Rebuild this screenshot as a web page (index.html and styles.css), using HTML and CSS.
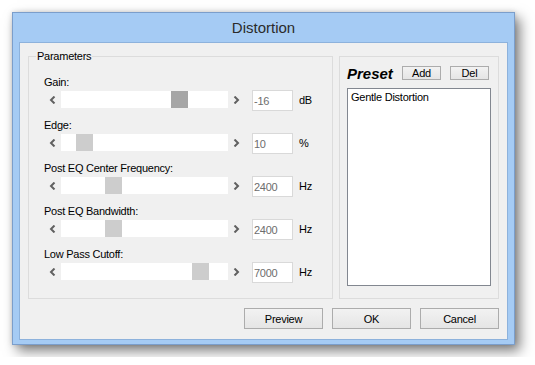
FILE: index.html
```html
<!DOCTYPE html>
<html lang="en">
<head>
    <meta charset="UTF-8">
    <title>Distortion</title>
    <link rel="stylesheet" href="styles.css">
</head>
<body>
    <div class="window">
        <div class="titlebar">Distortion</div>
        <div class="client">
            <div class="panels">
                <fieldset class="params">
                    <legend>Parameters</legend>
                    <div class="param-list">
                        <div class="param">
                            <div class="param-label">Gain:</div>
                            <div class="param-controls">
                                <div class="hscroll">
                                    <span class="arrow"><svg width="7" height="8" viewBox="0 0 7 8"><polyline points="5.5,0.5 2,4 5.5,7.5"/></svg></span>
                                    <div class="track"><div class="thumb active" style="margin-left: 110px"></div></div>
                                    <span class="arrow"><svg width="7" height="8" viewBox="0 0 7 8"><polyline points="1.5,0.5 5,4 1.5,7.5"/></svg></span>
                                </div>
                                <input class="value" type="text" value="-16" readonly>
                                <span class="unit">dB</span>
                            </div>
                        </div>
                        <div class="param">
                            <div class="param-label">Edge:</div>
                            <div class="param-controls">
                                <div class="hscroll">
                                    <span class="arrow"><svg width="7" height="8" viewBox="0 0 7 8"><polyline points="5.5,0.5 2,4 5.5,7.5"/></svg></span>
                                    <div class="track"><div class="thumb" style="margin-left: 15px"></div></div>
                                    <span class="arrow"><svg width="7" height="8" viewBox="0 0 7 8"><polyline points="1.5,0.5 5,4 1.5,7.5"/></svg></span>
                                </div>
                                <input class="value" type="text" value="10" readonly>
                                <span class="unit">%</span>
                            </div>
                        </div>
                        <div class="param">
                            <div class="param-label">Post EQ Center Frequency:</div>
                            <div class="param-controls">
                                <div class="hscroll">
                                    <span class="arrow"><svg width="7" height="8" viewBox="0 0 7 8"><polyline points="5.5,0.5 2,4 5.5,7.5"/></svg></span>
                                    <div class="track"><div class="thumb" style="margin-left: 44px"></div></div>
                                    <span class="arrow"><svg width="7" height="8" viewBox="0 0 7 8"><polyline points="1.5,0.5 5,4 1.5,7.5"/></svg></span>
                                </div>
                                <input class="value" type="text" value="2400" readonly>
                                <span class="unit">Hz</span>
                            </div>
                        </div>
                        <div class="param">
                            <div class="param-label">Post EQ Bandwidth:</div>
                            <div class="param-controls">
                                <div class="hscroll">
                                    <span class="arrow"><svg width="7" height="8" viewBox="0 0 7 8"><polyline points="5.5,0.5 2,4 5.5,7.5"/></svg></span>
                                    <div class="track"><div class="thumb" style="margin-left: 44px"></div></div>
                                    <span class="arrow"><svg width="7" height="8" viewBox="0 0 7 8"><polyline points="1.5,0.5 5,4 1.5,7.5"/></svg></span>
                                </div>
                                <input class="value" type="text" value="2400" readonly>
                                <span class="unit">Hz</span>
                            </div>
                        </div>
                        <div class="param">
                            <div class="param-label">Low Pass Cutoff:</div>
                            <div class="param-controls">
                                <div class="hscroll">
                                    <span class="arrow"><svg width="7" height="8" viewBox="0 0 7 8"><polyline points="5.5,0.5 2,4 5.5,7.5"/></svg></span>
                                    <div class="track"><div class="thumb" style="margin-left: 131px"></div></div>
                                    <span class="arrow"><svg width="7" height="8" viewBox="0 0 7 8"><polyline points="1.5,0.5 5,4 1.5,7.5"/></svg></span>
                                </div>
                                <input class="value" type="text" value="7000" readonly>
                                <span class="unit">Hz</span>
                            </div>
                        </div>
                    </div>
                </fieldset>

                <div class="preset">
                    <div class="preset-head">
                        <span class="preset-title">Preset</span>
                        <button class="small-btn">Add</button>
                        <button class="small-btn">Del</button>
                    </div>
                    <div class="preset-list">
                        <div class="preset-item">Gentle Distortion</div>
                    </div>
                </div>
            </div>

            <div class="buttons">
                <button class="btn">Preview</button>
                <button class="btn">OK</button>
                <button class="btn">Cancel</button>
            </div>
        </div>
    </div>
</body>
</html>
```

FILE: styles.css
```css
body {
    margin: 0;
    padding: 12px;
    background: #fff;
    font-family: "Liberation Sans", Arial, sans-serif;
    font-size: 11px;
    letter-spacing: -0.25px;
    color: #000;
}
.window {
    width: 503px;
    height: 333px;
    box-sizing: border-box;
    border: 1px solid #7b9ecb;
    background: #a5cbf4;
    padding: 0 6px 4px 6px;
    display: flex;
    flex-direction: column;
    box-shadow: 5px 6px 12px rgba(0, 0, 0, 0.5), 0 0 5px rgba(0, 0, 0, 0.15);
}
.titlebar {
    height: 29px;
    line-height: 29px;
    text-align: center;
    font-size: 15px;
    letter-spacing: 0;
    color: #2b2b2b;
}
.client {
    flex: 1;
    border: 1px solid #8db2dc;
    background: #f0f0f0;
    padding: 6px 8px 10px 8px;
    display: flex;
    flex-direction: column;
}
.panels {
    display: flex;
    align-items: flex-start;
}
.params {
    width: 306px;
    height: 250px;
    box-sizing: border-box;
    margin: 0;
    padding: 0;
    border: 1px solid #dcdcdc;
}
.params legend {
    margin-left: 7px;
    padding: 0 1px;
    line-height: 14px;
}
.param-list {
    padding: 12px 0 0 15px;
    display: flex;
    flex-direction: column;
    gap: 7px;
}
.param-label {
    line-height: 14px;
}
.param-controls {
    display: flex;
    align-items: flex-start;
    margin-top: 1px;
    height: 21px;
}
.hscroll {
    display: flex;
    width: 201px;
    height: 17px;
    margin-top: 1px;
}
.arrow {
    width: 17px;
    height: 17px;
    display: flex;
    align-items: center;
    justify-content: center;
}
.arrow svg polyline {
    fill: none;
    stroke: #606060;
    stroke-width: 2;
}
.track {
    flex: 1;
    background: #fff;
    display: flex;
}
.thumb {
    width: 17px;
    height: 17px;
    background: #cdcdcd;
}
.thumb.active {
    background: #a6a6a6;
}
.value {
    width: 41px;
    height: 21px;
    box-sizing: border-box;
    margin: 0 0 0 7px;
    padding: 0 1px;
    border: 1px solid #d9d9d9;
    background: #fff;
    color: #6d6d6d;
    font: inherit;
    letter-spacing: inherit;
    outline: none;
}
.unit {
    margin-left: 6px;
    line-height: 21px;
}
.preset {
    width: 160px;
    height: 243px;
    box-sizing: border-box;
    margin: 7px 0 0 6px;
    padding: 9px 0 0 7px;
    border: 1px solid #dcdcdc;
}
.preset-head {
    display: flex;
    align-items: center;
    height: 14px;
}
.preset-title {
    width: 55px;
    font-size: 15px;
    font-weight: bold;
    font-style: italic;
    letter-spacing: 0;
}
.small-btn {
    width: 39px;
    height: 14px;
    padding: 0;
    margin-right: 9px;
    border: 1px solid #acacac;
    background: linear-gradient(#f2f2f2, #e5e5e5);
    font: inherit;
    letter-spacing: inherit;
    line-height: 12px;
    color: #000;
}
.preset-list {
    width: 144px;
    height: 198px;
    box-sizing: border-box;
    margin-top: 8px;
    border: 1px solid #828790;
    background: #fff;
    padding: 1px 3px;
}
.preset-item {
    line-height: 14px;
}
.buttons {
    display: flex;
    justify-content: flex-end;
    gap: 9px;
    margin-top: 9px;
}
.btn {
    width: 79px;
    height: 21px;
    padding: 0;
    border: 1px solid #acacac;
    background: linear-gradient(#f2f2f2, #e5e5e5);
    font: inherit;
    letter-spacing: inherit;
    color: #000;
}
```
